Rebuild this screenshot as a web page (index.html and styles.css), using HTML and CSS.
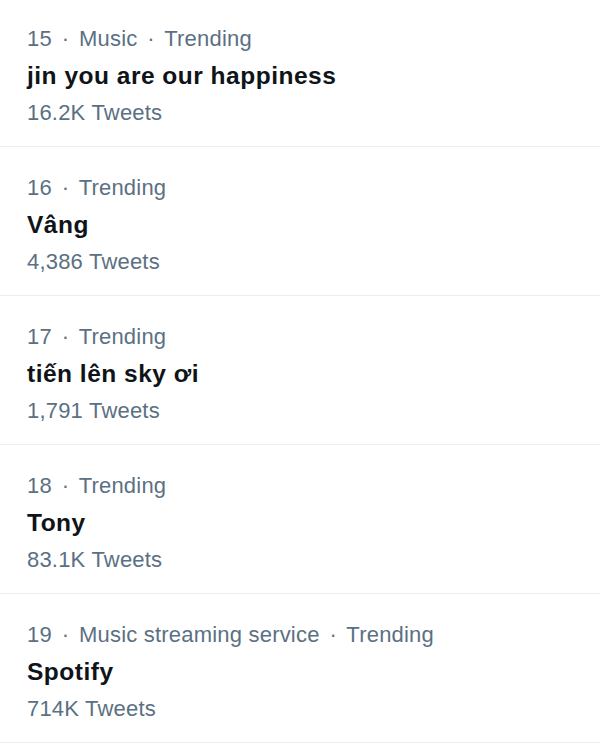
FILE: index.html
```html
<!DOCTYPE html>
<html>
<head>
<meta charset="utf-8">
<link rel="stylesheet" href="styles.css">
</head>
<body>
<ul class="trends">
  <li class="trend">
    <div class="meta">15 <span class="dot">·</span> Music <span class="dot">·</span> Trending</div>
    <div class="title">jin you are our happiness</div>
    <div class="count">16.2K Tweets</div>
  </li>
  <li class="trend">
    <div class="meta">16 <span class="dot">·</span> Trending</div>
    <div class="title">Vâng</div>
    <div class="count">4,386 Tweets</div>
  </li>
  <li class="trend">
    <div class="meta">17 <span class="dot">·</span> Trending</div>
    <div class="title">tiến lên sky ơi</div>
    <div class="count">1,791 Tweets</div>
  </li>
  <li class="trend">
    <div class="meta">18 <span class="dot">·</span> Trending</div>
    <div class="title">Tony</div>
    <div class="count">83.1K Tweets</div>
  </li>
  <li class="trend">
    <div class="meta">19 <span class="dot">·</span> Music streaming service <span class="dot">·</span> Trending</div>
    <div class="title">Spotify</div>
    <div class="count">714K Tweets</div>
  </li>
</ul>
</body>
</html>
```
FILE: styles.css
```css
html, body {
  margin: 0;
  padding: 0;
  background: #ffffff;
}
.trends {
  list-style: none;
  margin: 0;
  padding: 0;
  font-family: "Liberation Sans", Arial, sans-serif;
}
.trend {
  height: 149px;
  box-sizing: border-box;
  padding: 22px 27px 0 27px;
  border-bottom: 1px solid #ebeef0;
  display: flex;
  flex-direction: column;
}
.trend:first-child {
  height: 147px;
  padding-top: 20px;
}
.meta, .count {
  color: #5b7083;
  font-size: 22px;
  line-height: 37px;
  letter-spacing: 0.2px;
}
.dot {
  margin: 0 3.5px;
}
.title {
  color: #0f1419;
  font-size: 24.5px;
  font-weight: bold;
  line-height: 37px;
  letter-spacing: 0.5px;
}
```
